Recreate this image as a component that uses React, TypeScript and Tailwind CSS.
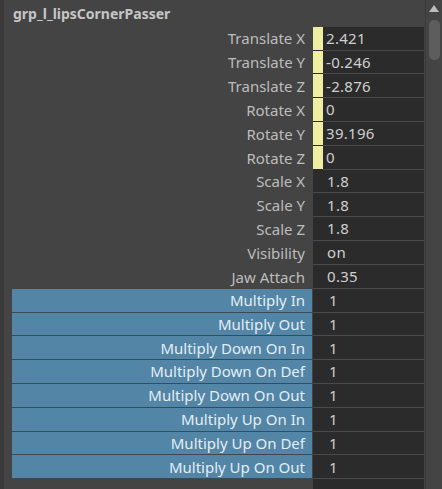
import React from "react";

type Attr = { label: string; value: string; keyed?: boolean; selected?: boolean };

const attrs: Attr[] = [
  { label: "Translate X", value: "2.421", keyed: true },
  { label: "Translate Y", value: "-0.246", keyed: true },
  { label: "Translate Z", value: "-2.876", keyed: true },
  { label: "Rotate X", value: "0", keyed: true },
  { label: "Rotate Y", value: "39.196", keyed: true },
  { label: "Rotate Z", value: "0", keyed: true },
  { label: "Scale X", value: "1.8" },
  { label: "Scale Y", value: "1.8" },
  { label: "Scale Z", value: "1.8" },
  { label: "Visibility", value: "on" },
  { label: "Jaw Attach", value: "0.35" },
  { label: "Multiply In", value: "1", selected: true },
  { label: "Multiply Out", value: "1", selected: true },
  { label: "Multiply Down On In", value: "1", selected: true },
  { label: "Multiply Down On Def", value: "1", selected: true },
  { label: "Multiply Down On Out", value: "1", selected: true },
  { label: "Multiply Up On In", value: "1", selected: true },
  { label: "Multiply Up On Def", value: "1", selected: true },
  { label: "Multiply Up On Out", value: "1", selected: true },
];

function AttrRow({ attr }: { attr: Attr }) {
  return (
    <div className="flex h-[24px]">
      <div
        className={`w-[300px] flex items-center justify-end pr-[7px] text-[15px] ${
          attr.selected ? "bg-[#5285a6] text-[#e4eef5] border-b border-[#3d4a53]" : "text-[#bdbdbd]"
        }`}
      >
        {attr.label}
      </div>
      <div className="ml-[1px] w-[111px] flex bg-[#2b2b2b] border-b border-[#4a4a4a]">
        {attr.keyed ? (
          <div className="w-[10px] bg-[#f0eea0] border-b border-[#2b2b2b] -mb-[1px]" />
        ) : (
          <div className="w-[10px]" />
        )}
        <div
          className={`flex items-center text-[15px] tracking-[0.3px] text-[#cfcfcf] ${
            attr.keyed ? "pl-[3px]" : attr.value === "1" ? "pl-[6px]" : "pl-[4px]"
          }`}
        >
          {attr.value}
        </div>
      </div>
    </div>
  );
}

export default function App() {
  return (
    <div
      className="w-[442px] h-[489px] bg-[#444444] flex overflow-hidden"
      style={{ fontFamily: "'Noto Sans', 'Open Sans', sans-serif" }}
    >
      {/* left edge */}
      <div className="w-[4px] bg-[#393939]" />
      <div className="flex-1 flex flex-col pl-[8px]">
        <div className="h-[27px] flex items-center pl-[1px] text-[14px] font-bold text-[#c6c6c6]">
          grp_l_lipsCornerPasser
        </div>
        {attrs.map((a) => (
          <AttrRow key={a.label} attr={a} />
        ))}
        <div className="flex h-[10px]">
          <div className="w-[300px]" />
          <div className="ml-[1px] w-[111px] bg-[#2b2b2b]" />
        </div>
      </div>
      {/* scrollbar */}
      <div className="w-[17px] flex flex-col items-center bg-[#444444] border-l border-[#3b3b3b]">
        <svg width="12" height="10" viewBox="0 0 12 10" className="mt-[4px]">
          <polygon points="6,1 11,8 1,8" fill="#bdbdbd" />
        </svg>
        <div className="mt-[6px] w-[11px] h-[40px] rounded-[5px] bg-[#5d5d5d]" />
      </div>
    </div>
  );
}
